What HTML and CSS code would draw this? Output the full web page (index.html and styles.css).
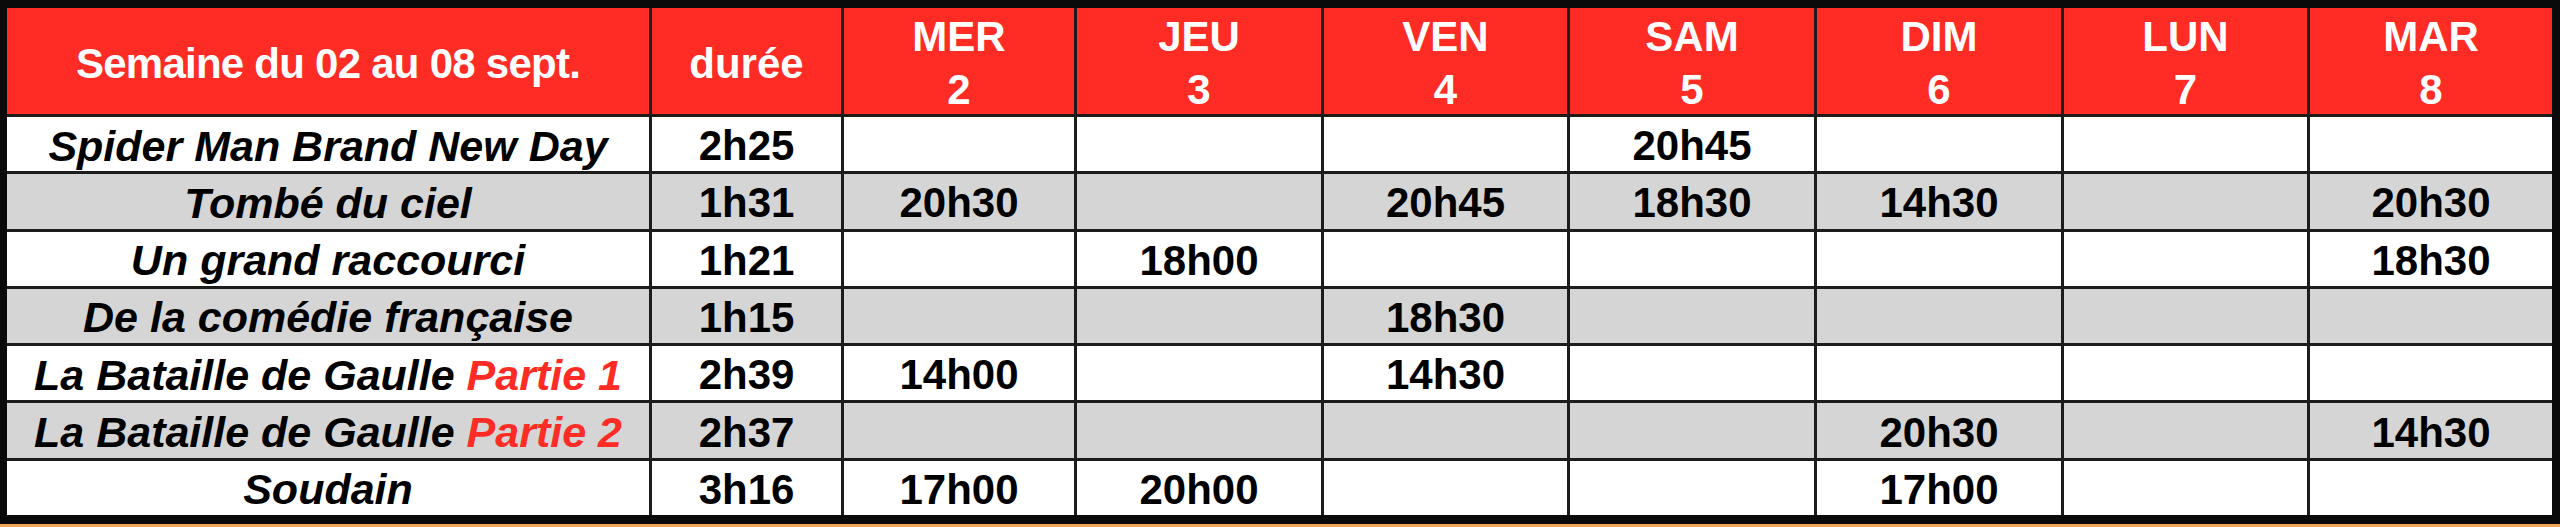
FILE: index.html
```html
<!DOCTYPE html>
<html lang="fr">
<head>
<meta charset="utf-8">
<title>Programme de la semaine</title>
<link rel="stylesheet" href="styles.css">
</head>
<body>
<div class="frame">
  <div class="sched">
    <div class="row head">
      <div class="cell h week">Semaine du 02 au 08 sept.</div>
      <div class="cell h dur">durée</div>
      <div class="cell h day"><span>MER</span><span>2</span></div>
      <div class="cell h day"><span>JEU</span><span>3</span></div>
      <div class="cell h day"><span>VEN</span><span>4</span></div>
      <div class="cell h day"><span>SAM</span><span>5</span></div>
      <div class="cell h day"><span>DIM</span><span>6</span></div>
      <div class="cell h day"><span>LUN</span><span>7</span></div>
      <div class="cell h day"><span>MAR</span><span>8</span></div>
    </div>

    <div class="row">
      <div class="cell title">Spider Man Brand New Day</div>
      <div class="cell">2h25</div>
      <div class="cell"></div><div class="cell"></div><div class="cell"></div>
      <div class="cell">20h45</div>
      <div class="cell"></div><div class="cell"></div><div class="cell"></div>
    </div>

    <div class="row g">
      <div class="cell title">Tombé du ciel</div>
      <div class="cell">1h31</div>
      <div class="cell">20h30</div>
      <div class="cell"></div>
      <div class="cell">20h45</div>
      <div class="cell">18h30</div>
      <div class="cell">14h30</div>
      <div class="cell"></div>
      <div class="cell">20h30</div>
    </div>

    <div class="row">
      <div class="cell title">Un grand raccourci</div>
      <div class="cell">1h21</div>
      <div class="cell"></div>
      <div class="cell">18h00</div>
      <div class="cell"></div><div class="cell"></div><div class="cell"></div><div class="cell"></div>
      <div class="cell">18h30</div>
    </div>

    <div class="row g">
      <div class="cell title">De la comédie française</div>
      <div class="cell">1h15</div>
      <div class="cell"></div><div class="cell"></div>
      <div class="cell">18h30</div>
      <div class="cell"></div><div class="cell"></div><div class="cell"></div><div class="cell"></div>
    </div>

    <div class="row">
      <div class="cell title">La Bataille de Gaulle&nbsp;<span class="part">Partie 1</span></div>
      <div class="cell">2h39</div>
      <div class="cell">14h00</div>
      <div class="cell"></div>
      <div class="cell">14h30</div>
      <div class="cell"></div><div class="cell"></div><div class="cell"></div><div class="cell"></div>
    </div>

    <div class="row g">
      <div class="cell title">La Bataille de Gaulle&nbsp;<span class="part">Partie 2</span></div>
      <div class="cell">2h37</div>
      <div class="cell"></div><div class="cell"></div><div class="cell"></div><div class="cell"></div>
      <div class="cell">20h30</div>
      <div class="cell"></div>
      <div class="cell">14h30</div>
    </div>

    <div class="row">
      <div class="cell title">Soudain</div>
      <div class="cell">3h16</div>
      <div class="cell">17h00</div>
      <div class="cell">20h00</div>
      <div class="cell"></div><div class="cell"></div>
      <div class="cell">17h00</div>
      <div class="cell"></div><div class="cell"></div>
    </div>
  </div>
</div>
<div class="strip"></div>
</body>
</html>
```

FILE: styles.css
```css
html, body {
  margin: 0;
  padding: 0;
  background: #0a0a0a;
}

body {
  width: 2560px;
  height: 527px;
  overflow: hidden;
  font-family: "Liberation Sans", Arial, Helvetica, sans-serif;
  font-weight: bold;
  color: #000;
}

.frame {
  box-sizing: border-box;
  height: 524px;
  padding: 8px 8px 9px 7px;
  background: #0a0a0a;
}

.sched {
  height: 100%;
  display: grid;
  grid-template-columns: 642px 189px 230px 244px 243px 244px 244px 243px 242px;
  grid-template-rows: 106px repeat(7, 1fr);
  gap: 3px;
  background: #1c1c1c;
}

.row {
  display: contents;
}

.cell {
  display: flex;
  align-items: center;
  justify-content: center;
  box-sizing: border-box;
  padding-top: 4px;
  background: #ffffff;
  font-size: 42px;
  line-height: 1;
  white-space: nowrap;
  min-width: 0;
  min-height: 0;
}

.row.g > .cell {
  background: #d5d5d5;
}

.title {
  font-style: italic;
  font-size: 43px;
}

.part {
  color: #fe2c25;
}

.row.head > .cell {
  background: #fe2c25;
  color: #ffffff;
}

.h {
  font-size: 42px;
  padding-top: 5px;
}

.week {
  letter-spacing: -0.75px;
}

.day {
  flex-direction: column;
  justify-content: flex-start;
  padding-top: 2px;
  line-height: 53px;
}

.strip {
  height: 3px;
  background: #f3a65a;
}
```
